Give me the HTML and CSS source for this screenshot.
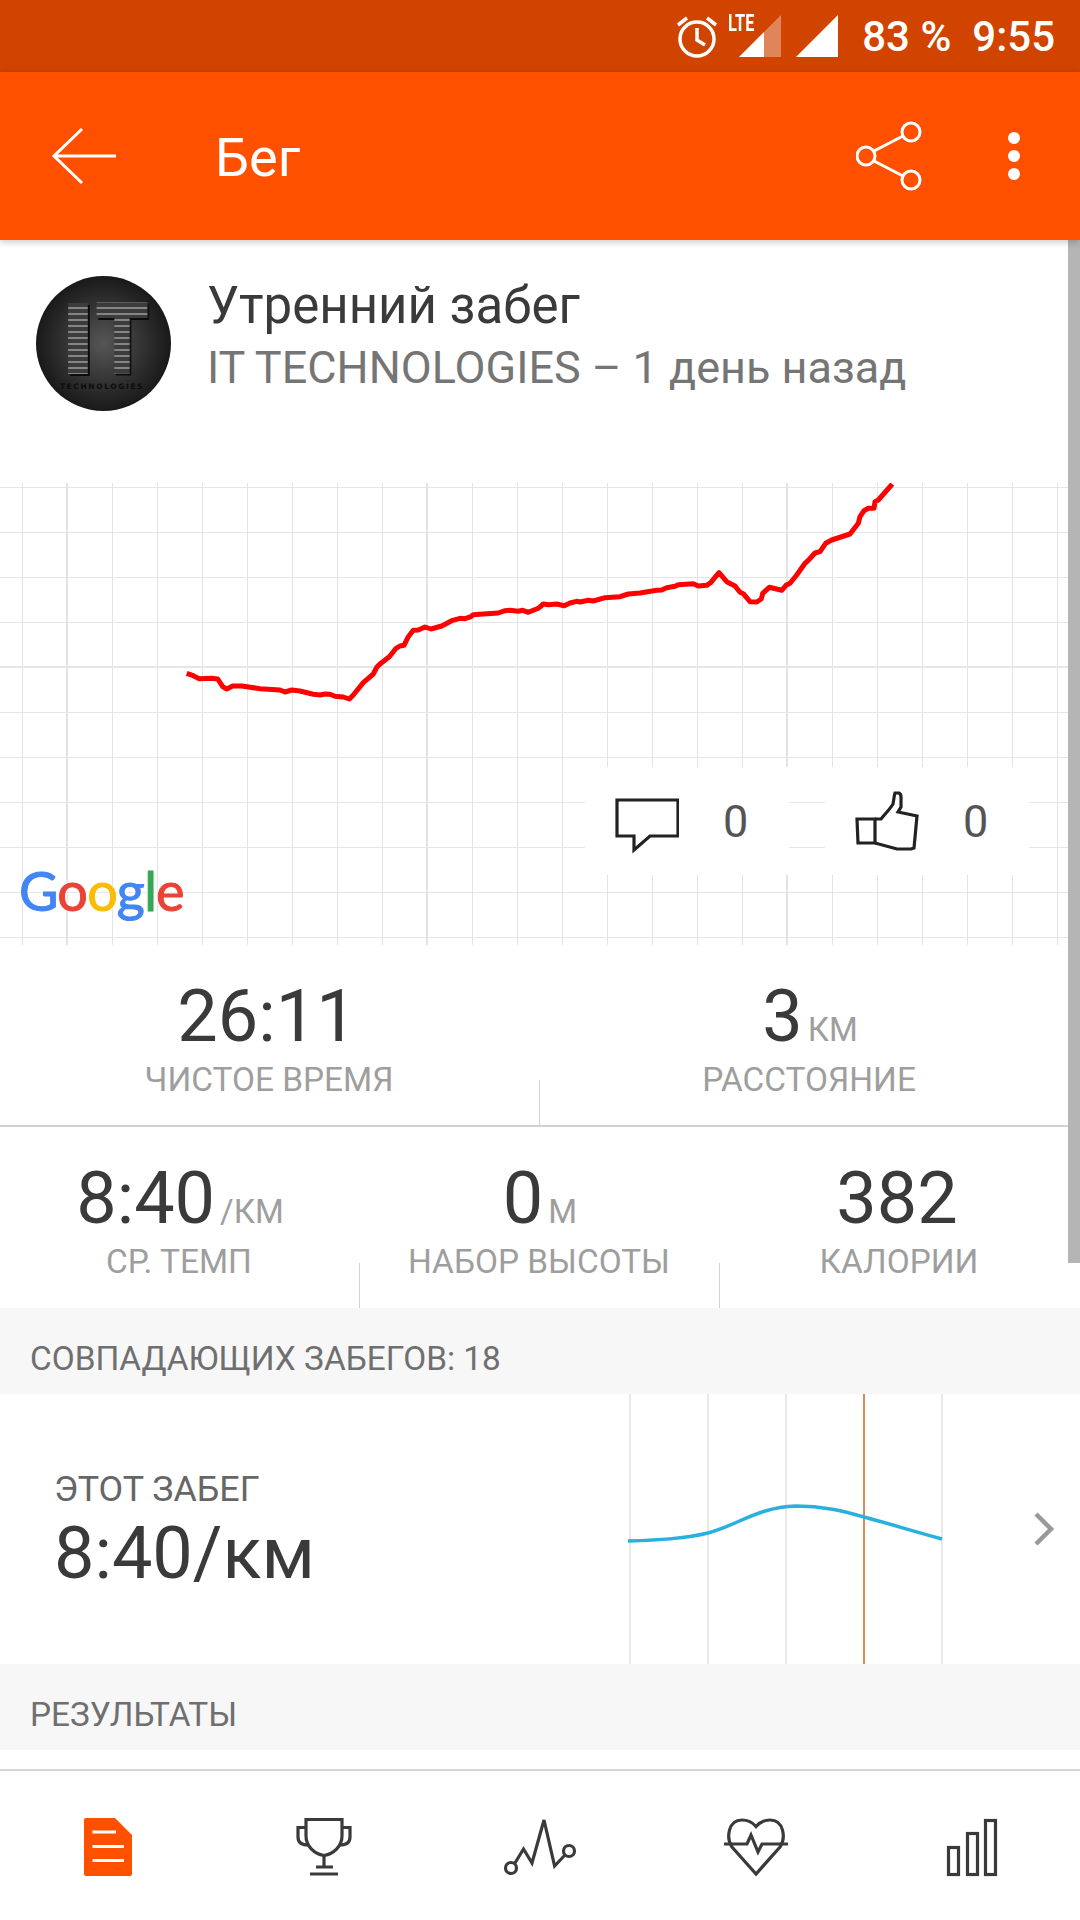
FILE: index.html
```html
<!DOCTYPE html>
<html>
<head>
    <title>Бег</title>
    <link rel="stylesheet" href="styles.css">
</head>
<body>
    <div class="status-bar">
        <svg class="alarm" viewBox="0 0 44 44">
            <circle cx="22" cy="24" r="17" />
            <path d="M22 13 V25 L30 30" />
            <path d="M3 10 L12 3 M41 10 L32 3" />
        </svg>
        <span class="lte">LTE</span>
        <svg class="signal-lte" viewBox="0 0 42 42">
            <path class="dim" d="M25 17 L42 0 V42 H25 Z" />
            <path d="M0 42 L25 17 V42 Z" />
        </svg>
        <svg class="signal" viewBox="0 0 42 42"><path d="M0 42 L42 0 V42 Z" /></svg>
        <span class="battery">83 %</span>
        <span class="clock">9:55</span>
    </div>

    <header class="app-bar">
        <svg class="back" viewBox="0 0 66 58"><path d="M32 2 L4 29 L32 56 M4 29 H66" /></svg>
        <span class="app-title">Бег</span>
        <svg class="share" viewBox="0 0 66 70">
            <circle cx="55" cy="11" r="9" />
            <circle cx="10" cy="35" r="9" />
            <circle cx="55" cy="59" r="9" />
            <path d="M18 30 L47 15 M18 40 L47 55" />
        </svg>
        <svg class="more" viewBox="0 0 12 48">
            <circle cx="6" cy="6" r="6" />
            <circle cx="6" cy="24" r="6" />
            <circle cx="6" cy="42" r="6" />
        </svg>
    </header>

    <main class="content">
        <section class="run-head">
            <svg class="avatar" viewBox="0 0 135 135">
                <defs>
                    <radialGradient id="disc">
                        <stop offset="0" stop-color="#565656" />
                        <stop offset="1" stop-color="#191919" />
                    </radialGradient>
                    <pattern id="stripes" width="6" height="6" patternUnits="userSpaceOnUse">
                        <rect width="6" height="6" fill="#3c3c3c" />
                        <rect width="6" height="2" fill="#858585" />
                    </pattern>
                </defs>
                <circle cx="67.5" cy="67.5" r="67.5" fill="url(#disc)" />
                <text class="avatar-it" transform="translate(24.5 97)">I</text>
                <text class="avatar-it" transform="translate(61 97) scale(0.78 1)">T</text>
                <text class="avatar-sub" x="66" y="113">TECHNOLOGIES</text>
            </svg>
            <div class="run-text">
                <div class="run-title">Утренний забег</div>
                <div class="run-sub">IT TECHNOLOGIES – 1 день назад</div>
            </div>
        </section>

        <section class="map">
            <svg class="route" viewBox="0 483 1080 462">
                <path d="M186.7 673.3 L193.3 675.7 L199.3 678.7 L211.7 678.3 L217.7 679 L222.7 686.7 L226.7 689 L232.7 686 L241.7 686 L260 688.7 L280 690 L285 692 L291.7 690 L300 691 L313.3 694.3 L320 695 L325 694 L330 694.3 L335 696.3 L343.3 697 L349.3 699 L353.3 695 L363.3 682.7 L373.3 674 L376.7 667.3 L380 664 L389.3 656.7 L395.7 648.7 L400 646 L404 645.3 L408.3 636.7 L413.3 630.3 L418.3 630 L425 627 L431 629 L441.7 626 L451.7 620.7 L460 618.3 L465 618.7 L471 616.7 L473.3 614.7 L483.3 614 L498.3 613 L505 610.7 L510 610.3 L518.3 611.3 L522.7 610.3 L528.3 612.3 L538.3 608.3 L543.3 604 L548.3 604.7 L556.7 604 L564.3 605.7 L570 603 L576.7 601.3 L580 602 L588.3 600.3 L593.3 601 L605 597.7 L620 596.7 L628.3 594 L640 593 L656.7 590.3 L661.7 590 L666.7 587.7 L675 586.3 L678.3 584.7 L693.3 583.7 L698.3 586 L706.7 585.3 L710.7 582.7 L719 572.7 L726.7 581.7 L735 586 L740 592.3 L743.3 593.7 L750 601.7 L756.7 602 L761.3 599 L762.7 593.3 L769.3 587.3 L781.7 590.3 L786 585.3 L790 583.3 L796.7 575 L805 563.3 L809.3 559.3 L815 553 L820 551.7 L825.7 543.3 L831.7 540 L850 534 L858.3 523.3 L860 516.7 L864 510.7 L868.3 508.3 L874 508.3 L875 501.7 L878.3 500 L892.3 484" />
            </svg>
            <div class="google"><span class="g-blue">G</span><span class="g-red">o</span><span class="g-yellow">o</span><span class="g-blue">g</span><span class="g-green">l</span><span class="g-red">e</span></div>
            <div class="social">
                <div class="social-box">
                    <svg class="social-icon comment" viewBox="0 0 64 54"><path d="M2 2 H63 V38 H35 L19 52 V38 H2 Z" /></svg>
                    <span class="social-count">0</span>
                </div>
                <div class="social-box">
                    <svg class="social-icon" viewBox="0 0 64 60">
                        <path d="M2 28 H20 V52 H3 Z" />
                        <path d="M20 28 H26 C31 22 35 18 38 13 C39 8 39 5 40 2 L44 2 C46 3 46 4 46 6 L46 16 L43 21 L62 25 L59 57 L56 58 H42 L20 52" />
                    </svg>
                    <span class="social-count">0</span>
                </div>
            </div>
        </section>

        <section class="stats stats-two">
            <div class="stat">
                <div class="stat-value bare"><span class="num">26:11</span></div>
                <div class="stat-label">ЧИСТОЕ ВРЕМЯ</div>
            </div>
            <div class="stat">
                <div class="stat-value"><span class="num">3</span><span class="unit">КМ</span></div>
                <div class="stat-label">РАССТОЯНИЕ</div>
            </div>
        </section>

        <section class="stats stats-three">
            <div class="stat">
                <div class="stat-value"><span class="num">8:40</span><span class="unit">/КМ</span></div>
                <div class="stat-label">СР. ТЕМП</div>
            </div>
            <div class="stat">
                <div class="stat-value"><span class="num">0</span><span class="unit">М</span></div>
                <div class="stat-label">НАБОР ВЫСОТЫ</div>
            </div>
            <div class="stat">
                <div class="stat-value bare"><span class="num">382</span></div>
                <div class="stat-label">КАЛОРИИ</div>
            </div>
        </section>

        <div class="section-head">СОВПАДАЮЩИХ ЗАБЕГОВ: 18</div>

        <section class="compare">
            <div class="compare-text">
                <div class="compare-label">ЭТОТ ЗАБЕГ</div>
                <div class="compare-value">8:40/км</div>
            </div>
            <svg class="compare-chart" viewBox="0 0 330 270">
                <path class="tick" d="M2 0 V270 M80 0 V270 M158 0 V270 M314 0 V270" />
                <path class="marker" d="M236 0 V270" />
                <path class="curve" d="M0 147 C30 146 55 145 80 139 C110 131 130 113 168 112 C195 112 215 117 236 123 C262 130 285 137 314 145" />
            </svg>
            <svg class="chevron" viewBox="0 0 22 36"><path d="M3 3 L18 18 L3 33" /></svg>
        </section>

        <div class="section-head">РЕЗУЛЬТАТЫ</div>
    </main>

    <div class="scrollbar"></div>

    <nav class="tabs">
        <svg class="tab-icon" viewBox="0 0 72 72">
            <path class="doc" d="M14 8 H43 L60 25 V64 Q60 66 58 66 H14 Q12 66 12 64 V10 Q12 8 14 8 Z" />
            <path class="doc-lines" d="M20.5 22 H44 M20.5 36.5 H52 M20.5 50.5 H52" />
        </svg>
        <svg class="tab-icon" viewBox="0 0 72 72">
            <path d="M18 9.5 H54 V26 C54 36 46 44 36 45.5 C26 44 18 36 18 26 Z" />
            <path d="M18 17.5 H10 V27 C10 32 13 35 20 35 M54 17.5 H62 V27 C62 32 59 35 52 35" />
            <path d="M36 45 V57 M28 57 H45 M22 64 H50" />
        </svg>
        <svg class="tab-icon" viewBox="0 0 72 72">
            <circle cx="7" cy="58" r="5.5" />
            <circle cx="65" cy="41" r="5.5" />
            <path d="M11 53 L19.5 39 L28 53 L40 10 L50.6 56 L61 45" />
        </svg>
        <svg class="tab-icon" viewBox="0 0 72 72">
            <path d="M36 64 L12 37 C6 28 8 10 22 10 C29 10 33 13 36 16.5 C39 13 43 10 50 10 C64 10 66 28 60 37 Z" />
            <path class="ekg" d="M4 34 H27 L31 25 L38 42 L42 34 H68" />
        </svg>
        <svg class="tab-icon" viewBox="0 0 72 72">
            <rect x="12.5" y="37.5" width="10" height="27" />
            <rect x="31.5" y="23.5" width="10" height="41" />
            <rect x="49.5" y="10.5" width="10" height="54" />
        </svg>
    </nav>
</body>
</html>
```

FILE: styles.css
```css
* {
    box-sizing: border-box;
}
html, body {
    margin: 0;
    padding: 0;
}
body {
    position: relative;
    width: 1080px;
    height: 1920px;
    overflow: hidden;
    display: flex;
    flex-direction: column;
    font-family: Roboto, sans-serif;
    color: #3a3a3a;
    background-color: white;
}

/* status bar */
.status-bar {
    height: 72px;
    flex: none;
    display: flex;
    align-items: center;
    justify-content: flex-end;
    padding-right: 25px;
    background-color: #d04400;
    color: white;
    font-weight: 500;
    font-size: 42px;
}
.alarm {
    width: 44px;
    height: 44px;
    margin-right: 9px;
    margin-top: 1px;
    fill: none;
    stroke: white;
    stroke-width: 3.5;
}
.lte {
    width: 28px;
    font-size: 24px;
    font-weight: 700;
    line-height: 24px;
    margin-bottom: 26px;
    margin-right: -17px;
    transform: scaleX(0.68);
    transform-origin: left center;
}
.signal-lte, .signal {
    width: 42px;
    height: 42px;
    fill: white;
}
.signal-lte .dim {
    fill: white;
    opacity: 0.35;
}
.signal-lte {
    margin-right: 15px;
}
.battery {
    margin-left: 24px;
    margin-right: 21px;
}

/* app bar */
.app-bar {
    position: relative;
    z-index: 2;
    height: 168px;
    flex: none;
    display: flex;
    align-items: center;
    background-color: #ff5000;
    box-shadow: 0 2px 7px rgba(0, 0, 0, 0.22);
}
.back {
    width: 66px;
    height: 58px;
    margin-left: 50px;
    fill: none;
    stroke: #fff;
    stroke-width: 3;
}
.app-title {
    margin-left: 99px;
    padding-top: 2px;
    font-size: 54px;
    color: white;
}
.share {
    width: 66px;
    height: 70px;
    margin-left: auto;
    fill: none;
    stroke: white;
    stroke-width: 3;
}
.more {
    width: 12px;
    height: 48px;
    margin-left: 86px;
    margin-right: 60px;
    fill: white;
}

/* run header */
.content {
    flex: 1;
    display: flex;
    flex-direction: column;
}
.run-head {
    height: 243px;
    flex: none;
    display: flex;
    padding: 36px 0 0 36px;
}
.avatar {
    width: 135px;
    height: 135px;
}
.avatar-it {
    font-family: "DejaVu Sans", sans-serif;
    font-weight: 700;
    font-size: 94px;
    fill: url(#stripes);
    stroke: url(#stripes);
    stroke-width: 2;
    filter: drop-shadow(2px 2px 0 #0c0c0c);
}
.avatar-sub {
    font-family: "DejaVu Sans", sans-serif;
    font-weight: 700;
    font-size: 7.5px;
    letter-spacing: 1.6px;
    text-anchor: middle;
    fill: #0c0c0c;
}
.run-text {
    margin-left: 36px;
}
.run-title {
    font-size: 51px;
    line-height: 60px;
}
.run-sub {
    font-size: 45px;
    line-height: 64px;
    color: #757575;
}

/* map tiles */
.map {
    position: relative;
    height: 462px;
    flex: none;
    background-color: white;
    background-image:
        linear-gradient(#e6e6e6 2px, transparent 2px),
        linear-gradient(90deg, #e4e4e4 2px, transparent 2px),
        linear-gradient(#e6e6e6 1px, transparent 1px),
        linear-gradient(90deg, #e3e3e3 1px, transparent 1px);
    background-size: 360px 360px, 360px 360px, 45px 45px, 45px 45px;
    background-position: 0 183px, 66px 0, 0 4px, 22px 0;
}
.route {
    position: absolute;
    top: 0;
    left: 0;
    width: 1080px;
    height: 462px;
    fill: none;
    stroke: #ff0000;
    stroke-width: 5;
    stroke-linejoin: round;
}
.google {
    position: absolute;
    left: 19px;
    top: 373px;
    font-family: Lato, sans-serif;
    font-weight: 400;
    font-size: 54px;
    line-height: 70px;
    letter-spacing: -0.8px;
    -webkit-text-stroke: 1px;
    text-shadow: 0 0 4px white, 0 0 4px white;
}
.g-blue { color: #4285f4; }
.g-red { color: #ea4335; }
.g-yellow { color: #fbbc05; }
.g-green { color: #34a853; }
.social {
    position: absolute;
    left: 585px;
    top: 284px;
    display: flex;
    gap: 36px;
}
.social-box {
    width: 204px;
    height: 108px;
    display: flex;
    align-items: center;
    padding-left: 30px;
    background-color: white;
}
.social-icon {
    width: 64px;
    height: 60px;
    margin-right: 44px;
    fill: none;
    stroke: #222;
    stroke-width: 3.2;
}
.comment {
    margin-top: 8px;
}
.social-count {
    font-size: 45px;
    color: #555;
}

/* stats */
.stats {
    height: 182px;
    flex: none;
    display: flex;
}
.stats-two {
    border-bottom: 2px solid #d2d2d2;
}
.stats-three {
    height: 181px;
}
.stat {
    position: relative;
    flex: 1;
    text-align: center;
}
.stat + .stat::before {
    content: "";
    position: absolute;
    left: -1px;
    bottom: 0;
    width: 1px;
    height: 45px;
    background-color: #d2d2d2;
}
.stat-value {
    margin-top: 30px;
    line-height: 84px;
    white-space: nowrap;
}
.stat-value.bare {
    padding-right: 6px;
}
.num {
    font-size: 72px;
}
.unit {
    margin-left: 5px;
    font-size: 33px;
    color: #9e9e9e;
}
.stat-label {
    margin-top: -18px;
    padding-right: 2px;
    font-size: 33.4px;
    line-height: 40px;
    color: #9e9e9e;
}

/* sections */
.section-head {
    height: 86px;
    flex: none;
    padding-left: 30px;
    padding-top: 26px;
    font-size: 33.4px;
    line-height: 50px;
    color: #6f6f6f;
    background-color: #f7f7f7;
}
.compare {
    height: 270px;
    flex: none;
    display: flex;
    align-items: center;
}
.compare-text {
    width: 628px;
    padding-left: 54px;
    padding-top: 7px;
}
.compare-label {
    margin-bottom: 3px;
    font-size: 35.8px;
    line-height: 40px;
    color: #666;
}
.compare-value {
    font-size: 72px;
    line-height: 84px;
}
.compare-chart {
    width: 330px;
    height: 270px;
    fill: none;
}
.tick {
    stroke: #e2e2e2;
    stroke-width: 1.5;
}
.marker {
    stroke: #cf6f2e;
    stroke-width: 1.6;
}
.curve {
    stroke: #29b0e0;
    stroke-width: 3.5;
}
.chevron {
    width: 22px;
    height: 36px;
    margin-left: 75px;
    fill: none;
    stroke: #999;
    stroke-width: 4.5;
}
.scrollbar {
    position: absolute;
    top: 240px;
    right: 0;
    width: 12px;
    height: 1023px;
    background-color: #b5b5b5;
}

/* bottom tabs */
.tabs {
    height: 151px;
    flex: none;
    display: flex;
    align-items: center;
    justify-content: space-around;
    border-top: 2px solid #d6d6d6;
}
.tab-icon {
    width: 72px;
    height: 72px;
    overflow: visible;
    fill: none;
    stroke: #3a3a3a;
    stroke-width: 3.2;
}
.tab-icon .doc {
    fill: #ff5000;
    stroke: none;
}
.tab-icon .doc-lines {
    stroke: white;
    stroke-width: 3;
}
```
